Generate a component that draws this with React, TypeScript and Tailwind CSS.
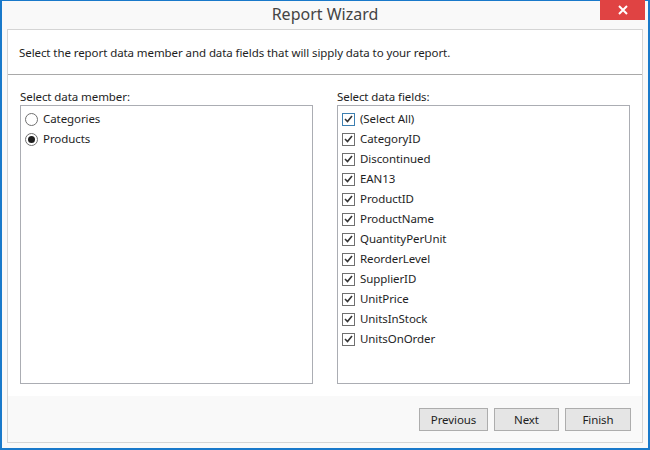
import { useState } from 'react';

const fields = [
  '(Select All)',
  'CategoryID',
  'Discontinued',
  'EAN13',
  'ProductID',
  'ProductName',
  'QuantityPerUnit',
  'ReorderLevel',
  'SupplierID',
  'UnitPrice',
  'UnitsInStock',
  'UnitsOnOrder',
];

const CheckMark = () => (
  <svg width="9" height="8" viewBox="0 0 9 8" className="block">
    <path d="M1 4 L3.5 6.5 L8 1" fill="none" stroke="#333" strokeWidth="1.6" />
  </svg>
);

const App = () => {
  const [member, setMember] = useState('Products');

  return (
    <div
      className="w-[650px] h-[450px] flex flex-col bg-[#f9f9f9] border-x-2 border-b-2 border-t border-[#1979ca] text-[11.5px] tracking-[-0.08px] text-[#1e1e1e]"
      style={{ fontFamily: '"Segoe UI", "Noto Sans", sans-serif' }}
    >
      {/* Title bar */}
      <div className="relative h-[28px] flex items-center justify-center">
        <span className="text-[16px] tracking-normal text-[#444] leading-none -mt-[3px]">Report Wizard</span>
        <button className="absolute right-[3px] -top-px w-[45px] h-[20px] bg-[#e04343] flex items-center justify-center">
          <svg width="10" height="10" viewBox="0 0 10 10">
            <path d="M1 1 L9 9 M9 1 L1 9" stroke="#fff" strokeWidth="2" />
          </svg>
        </button>
      </div>

      {/* Content panel */}
      <div className="flex-1 mx-[5px] mb-[5px] border border-[#d5d5d5] flex flex-col">
        <div className="h-[44px] bg-white flex items-center px-[11px] pt-[2px]">
          Select the report data member and data fields that will sipply data to your report.
        </div>
        <div className="h-px bg-[#a9a9a9]" />

        <div className="flex-1 bg-white flex gap-[24px] px-[12px] pt-[14px] pb-[12px]">
          <div className="w-[293px] flex flex-col">
            <div className="h-[16px] leading-4">Select data member:</div>
            <div className="h-[279px] border border-[#abadb3] pt-[3px] pl-[4px]">
              {['Categories', 'Products'].map((m) => (
                <div key={m} className="h-5 flex items-center gap-[5px]" onClick={() => setMember(m)}>
                  <span className="w-[13px] h-[13px] rounded-full border border-[#707070] bg-white flex items-center justify-center">
                    {member === m && <span className="w-[7px] h-[7px] rounded-full bg-[#1e1e1e]" />}
                  </span>
                  <span>{m}</span>
                </div>
              ))}
            </div>
          </div>

          <div className="w-[293px] flex flex-col">
            <div className="h-[16px] leading-4">Select data fields:</div>
            <div className="h-[279px] border border-[#abadb3] pt-[3px] pl-[4px]">
              {fields.map((f, i) => (
                <div key={f} className="h-5 flex items-center gap-[5px]">
                  <span
                    className={
                      i === 0
                        ? 'w-[13px] h-[13px] border border-[#3c7fb1] bg-white flex items-center justify-center'
                        : 'w-[13px] h-[13px] border border-[#707070] bg-white flex items-center justify-center'
                    }
                  >
                    <CheckMark />
                  </span>
                  <span>{f}</span>
                </div>
              ))}
            </div>
          </div>
        </div>

        {/* Footer */}
        <div className="h-[46px] bg-[#f9f9f9] flex justify-end items-start gap-[6px] pt-[12px] pr-[11px]">
          <button className="w-[69px] h-[23px] border border-[#adadad] bg-[#e5e5e5]">Previous</button>
          <button className="w-[65px] h-[23px] border border-[#adadad] bg-[#e5e5e5]">Next</button>
          <button className="w-[66px] h-[23px] border border-[#adadad] bg-[#e5e5e5]">Finish</button>
        </div>
      </div>
    </div>
  );
};

export default App;
